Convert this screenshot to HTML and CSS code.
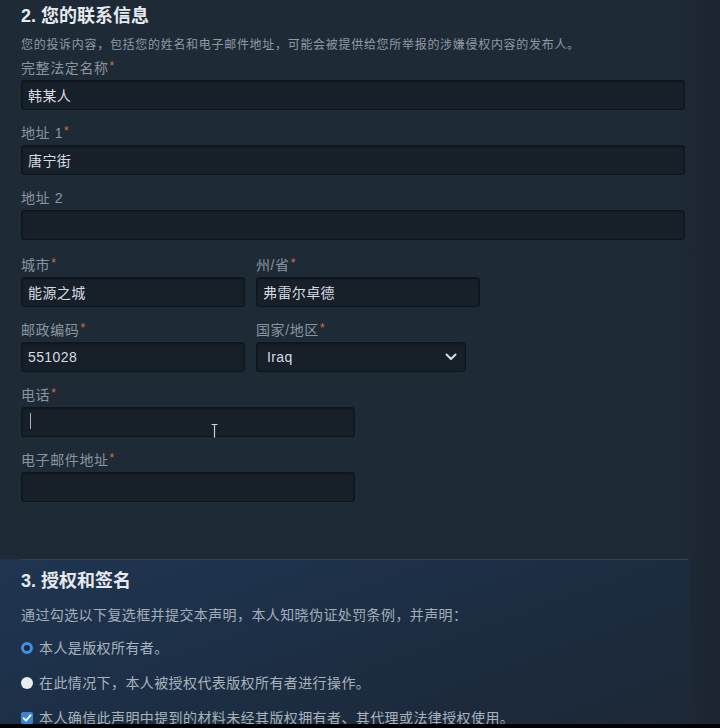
FILE: index.html
```html
<!DOCTYPE html>
<html lang="zh-CN">
<head>
  <meta charset="UTF-8">
  <title>联系信息</title>
  <link rel="stylesheet" href="styles.css">
</head>

<body>
  <div class="page">
    <div class="section contact">
      <h2 class="section-title">2. 您的联系信息</h2>
      <p class="hint">您的投诉内容，包括您的姓名和电子邮件地址，可能会被提供给您所举报的涉嫌侵权内容的发布人。</p>

      <div class="fields">
        <div class="field">
          <label>完整法定名称<span class="req">*</span></label>
          <input type="text" class="input" value="韩某人">
        </div>

        <div class="field">
          <label>地址 1<span class="req">*</span></label>
          <input type="text" class="input" value="唐宁街">
        </div>

        <div class="field">
          <label>地址 2</label>
          <input type="text" class="input" value="">
        </div>

        <div class="row first-row">
          <div class="field half">
            <label>城市<span class="req">*</span></label>
            <input type="text" class="input" value="能源之城">
          </div>
          <div class="field half">
            <label>州/省<span class="req">*</span></label>
            <input type="text" class="input" value="弗雷尔卓德">
          </div>
        </div>

        <div class="row">
          <div class="field half">
            <label>邮政编码<span class="req">*</span></label>
            <input type="text" class="input" value="551028">
          </div>
          <div class="field select-field">
            <label>国家/地区<span class="req">*</span></label>
            <div class="select-wrap">
              <select class="input select">
                <option>Iraq</option>
              </select>
              <svg class="chevron" width="12" height="8" viewBox="0 0 12 8">
                <path d="M1.5 1.5 L6 6 L10.5 1.5" fill="none" stroke="#d6dce2" stroke-width="2" stroke-linecap="round" stroke-linejoin="round"/>
              </svg>
            </div>
          </div>
        </div>

        <div class="field narrow">
          <label>电话<span class="req">*</span></label>
          <div class="input-wrap">
            <input type="text" class="input" value="">
            <span class="caret"></span>
            <svg class="ibeam" width="7" height="14" viewBox="0 0 7 14">
              <path d="M0.5 0.5 H6.5 M3.5 0.5 V13.5" fill="none" stroke="#c9d0d6" stroke-width="1.2"/>
            </svg>
          </div>
        </div>

        <div class="field narrow">
          <label>电子邮件地址<span class="req">*</span></label>
          <input type="text" class="input" value="">
        </div>
      </div>
    </div>

    <div class="section signature">
      <h2 class="section-title">3. 授权和签名</h2>
      <p class="statement">通过勾选以下复选框并提交本声明，本人知晓伪证处罚条例，并声明：</p>

      <div class="options">
        <div class="option">
          <span class="radio checked"></span>
          <span>本人是版权所有者。</span>
        </div>
        <div class="option">
          <span class="radio"></span>
          <span>在此情况下，本人被授权代表版权所有者进行操作。</span>
        </div>
        <div class="option">
          <span class="checkbox">
            <svg width="12" height="12" viewBox="0 0 12 12">
              <path d="M2.5 6.2 L5 8.6 L9.6 3.2" fill="none" stroke="#ffffff" stroke-width="1.8" stroke-linecap="round" stroke-linejoin="round"/>
            </svg>
          </span>
          <span>本人确信此声明中提到的材料未经其版权拥有者、其代理或法律授权使用。</span>
        </div>
      </div>
    </div>
  </div>

  <div class="player-edge"></div>
</body>
</html>
```

FILE: styles.css
```css
:root {
  --bg: #1f2a37;
  --input-bg: #171f29;
  --input-border: #0f151c;
  --title: #e6eaee;
  --label: #8a95a1;
  --text: #d6dce2;
  --muted: #8f9aa6;
  --req: #d2713d;
  --accent: #3f8fe2;
}

* {
  box-sizing: border-box;
}

body {
  margin: 0;
  background: linear-gradient(90deg, var(--bg) 0%, var(--bg) 94%, #1b2430 100%);
  font-family: "Liberation Sans", "Noto Sans CJK SC", sans-serif;
  color: var(--text);
  min-height: 728px;
  overflow: hidden;
}

.page {
  width: 690px;
}

.section {
  padding: 0 0 0 21px;
}

.section-title {
  margin: 4px 0 0;
  height: 24px;
  font-size: 18px;
  line-height: 24px;
  font-weight: bold;
  color: var(--title);
}

.hint {
  margin: 8px 0 0;
  height: 18px;
  font-size: 12px;
  line-height: 18px;
  letter-spacing: 0.7px;
  color: var(--muted);
}

.fields {
  display: flex;
  flex-direction: column;
  gap: 13px;
  margin-top: 4px;
  width: 664px;
}

.field {
  display: flex;
  flex-direction: column;
  gap: 2px;
}

.field label {
  display: block;
  height: 20px;
  font-size: 14px;
  line-height: 20px;
  letter-spacing: 0.6px;
  color: var(--label);
}

.req {
  color: var(--req);
  font-size: 12px;
  line-height: 1;
  margin-left: 1px;
  vertical-align: top;
  position: relative;
  top: 2px;
}

.input {
  display: block;
  width: 100%;
  height: 30px;
  padding: 0 6px;
  border: 1px solid var(--input-border);
  border-radius: 3px;
  background: var(--input-bg);
  box-shadow: inset 0 1px 2px rgba(0, 0, 0, 0.35);
  color: var(--text);
  font-family: "Liberation Sans", "Noto Sans CJK SC", sans-serif;
  font-size: 14px;
  letter-spacing: 0.4px;
  outline: none;
}

.row {
  display: flex;
  gap: 11px;
}

.first-row {
  margin-top: 2px;
}

.half {
  width: 224px;
}

.select-field {
  width: 210px;
}

.narrow {
  width: 334px;
}

.select-wrap,
.input-wrap {
  position: relative;
}

.select {
  appearance: none;
  padding-left: 10px;
}

.chevron {
  position: absolute;
  right: 9px;
  top: 11px;
  pointer-events: none;
}

.caret {
  position: absolute;
  left: 9px;
  top: 6px;
  width: 1px;
  height: 16px;
  background: #aab3bc;
}

.ibeam {
  position: absolute;
  left: 190px;
  top: 17px;
}

.signature {
  margin-top: 57px;
  padding: 0;
  background: linear-gradient(160deg, #1f3550 0%, #1d3048 35%, #1c2a3c 70%, #1d2836 100%);
}

.signature .section-title {
  margin: 0 2px 0 21px;
  height: auto;
  padding-top: 9px;
  border-top: 1px solid #30445a;
}

.statement {
  margin: 12px 0 0 21px;
  height: 20px;
  font-size: 14px;
  line-height: 20px;
  letter-spacing: 0.4px;
  color: #a3aeb9;
}

.options {
  display: flex;
  flex-direction: column;
  gap: 15px;
  margin: 13px 0 0 21px;
  padding-bottom: 20px;
}

.option {
  display: flex;
  align-items: center;
  gap: 6px;
  height: 20px;
  font-size: 14px;
  line-height: 20px;
  letter-spacing: 0.4px;
  color: #a8b3be;
}

.radio {
  width: 12px;
  height: 12px;
  border-radius: 50%;
  background: #e8ecef;
  flex: none;
}

.radio.checked {
  background: #1c2a3a;
  border: 3px solid var(--accent);
}

.checkbox {
  width: 12px;
  height: 12px;
  border-radius: 2px;
  background: #3a84d6;
  flex: none;
  display: flex;
}

.player-edge {
  position: fixed;
  left: 0;
  right: 0;
  bottom: 0;
  height: 4px;
  background: #000;
}
```
